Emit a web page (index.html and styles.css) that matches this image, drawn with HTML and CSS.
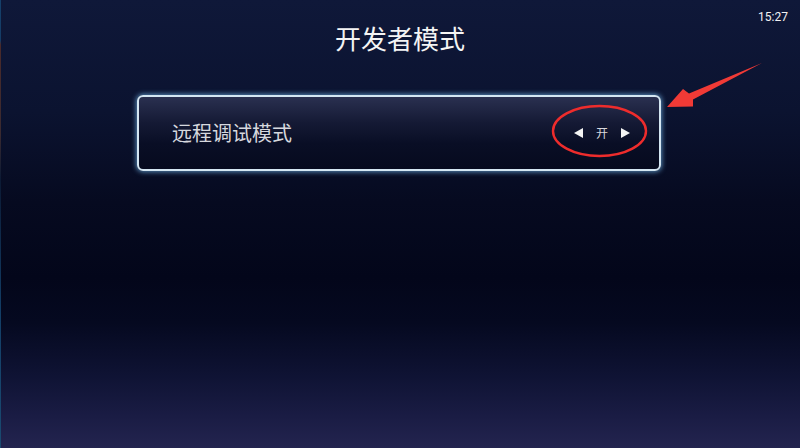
FILE: index.html
```html
<!DOCTYPE html>
<html lang="zh-CN">
<head>
<meta charset="utf-8">
<title>开发者模式</title>
<link rel="stylesheet" href="styles.css">
</head>
<body>
<div class="screen">
  <div class="topbar"><span class="clock">15:27</span></div>
  <h1 class="title">开发者模式</h1>
  <div class="card">
    <span class="label">远程调试模式</span>
    <div class="switch">
      <span class="tri tri-left"></span>
      <span class="value">开</span>
      <span class="tri tri-right"></span>
    </div>
  </div>
  <svg class="annot" width="800" height="448" viewBox="0 0 800 448">
    <ellipse cx="599.5" cy="131" rx="46.5" ry="25" fill="none" stroke="#ee2c2c" stroke-width="2.4"/>
    <polygon points="667,107 683,89 689,93.5 762,63 693,99.5 693,106.5" fill="#f03a36"/>
  </svg>
</div>
</body>
</html>
```
FILE: styles.css
```css
html, body {
  margin: 0;
  padding: 0;
}
body {
  width: 800px;
  height: 448px;
  overflow: hidden;
  font-family: "Noto Sans CJK SC", "Noto Sans", sans-serif;
}
.screen {
  position: relative;
  width: 800px;
  height: 448px;
  display: flex;
  flex-direction: column;
  background-image:
    linear-gradient(to bottom, #15406a 0%, #153c66 9%, #4a2a2a 10%, #3a2a30 30%, #0c1a34 40%, #133e66 70%, #1a4a70 100%),
    linear-gradient(to bottom, #0f1839 0%, #0b1330 25%, #060a20 45%, #03061a 62%, #050920 72%, #0f1334 84%, #1a1c44 93%, #23244f 100%);
  background-size: 1px 100%, 100% 100%;
  background-repeat: no-repeat;
}
.topbar {
  height: 23px;
  display: flex;
  justify-content: flex-end;
  align-items: flex-end;
  padding-right: 12px;
}
.clock {
  color: #f2f2f2;
  font-family: "Roboto", "Liberation Sans", sans-serif;
  font-size: 12px;
  line-height: 12px;
}
.title {
  margin: 0;
  height: 30px;
  line-height: 30px;
  text-align: center;
  color: #f4f4f4;
  font-size: 26px;
  font-weight: 400;
}
.card {
  margin: 42px 0 0 137px;
  width: 524px;
  height: 76px;
  box-sizing: border-box;
  border: 2px solid #d4e6f2;
  border-radius: 6px;
  box-shadow: 0 0 5px 1px rgba(110, 175, 225, 0.75);
  background: linear-gradient(to bottom, #2a3050 0%, #151a35 35%, #090e25 65%, #060a1e 100%);
  display: flex;
  align-items: center;
  justify-content: space-between;
  padding: 0 29px 0 33px;
}
.label {
  color: #d6d8de;
  font-size: 20px;
  line-height: 24px;
}
.switch {
  display: flex;
  align-items: center;
  gap: 13px;
}
.value {
  color: #d8d8dc;
  font-size: 12px;
  line-height: 12px;
}
.tri {
  width: 0;
  height: 0;
  border-top: 5px solid transparent;
  border-bottom: 5px solid transparent;
}
.tri-left {
  border-right: 9px solid #f4f4f4;
}
.tri-right {
  border-left: 9px solid #f4f4f4;
}
.annot {
  position: absolute;
  left: 0;
  top: 0;
  pointer-events: none;
}
```
